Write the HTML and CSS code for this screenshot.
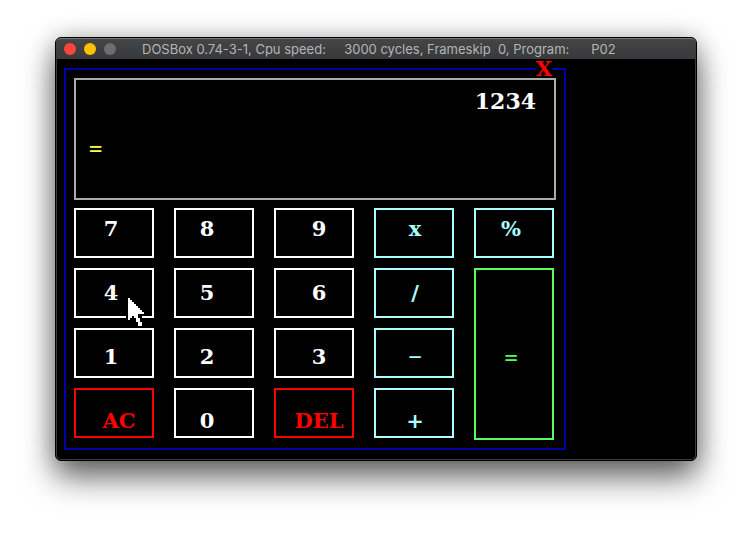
FILE: index.html
```html
<!DOCTYPE html>
<html lang="en">
<head>
<meta charset="utf-8">
<meta name="viewport" content="width=device-width, initial-scale=1">
<title>DOSBox – P02</title>
<link rel="stylesheet" href="styles.css">
</head>
<body>
<main class="window">
  <header class="titlebar">
    <div class="lights">
      <span class="light light-close"></span>
      <span class="light light-minimize"></span>
      <span class="light light-zoom"></span>
    </div>
    <h1 class="title">DOSBox 0.74-3-1, Cpu speed:     3000 cycles, Frameskip  0, Program:      P02</h1>
  </header>
  <div class="screen">
    <section class="calculator">
      <button class="close" type="button">X</button>
      <div class="display">
        <output class="entry">1234</output>
        <output class="result sign">=</output>
      </div>
      <div class="keypad">
        <button class="key row-1 col-1" type="button">7</button>
        <button class="key row-1 col-2" type="button">8</button>
        <button class="key row-1 col-3" type="button">9</button>
        <button class="key operator row-1 col-4" type="button">x</button>
        <button class="key operator row-1 col-5" type="button">%</button>
        <button class="key row-2 col-1" type="button">4</button>
        <button class="key row-2 col-2" type="button">5</button>
        <button class="key row-2 col-3" type="button">6</button>
        <button class="key operator row-2 col-4" type="button">/</button>
        <button class="key equals sign row-3 col-5" type="button">=</button>
        <button class="key row-3 col-1" type="button">1</button>
        <button class="key row-3 col-2" type="button">2</button>
        <button class="key row-3 col-3" type="button">3</button>
        <button class="key operator sign row-3 col-4" type="button">−</button>
        <button class="key command row-4 col-3" type="button">AC</button>
        <button class="key row-4 col-2" type="button">0</button>
        <button class="key command row-4 col-3" type="button">DEL</button>
        <button class="key operator row-4 col-4" type="button">+</button>
      </div>
      <svg class="pointer" viewBox="0 0 10 16" shape-rendering="crispEdges" aria-hidden="true">
        <path d="M1 1h1v1h1v1h1v1h1v1h1v1h1v1h1v1h1v1H6v2h1v2h1v2H6v-2H5v-2H4v-1H3v1H2v1H1z"/>
      </svg>
    </section>
  </div>
</main>
</body>
</html>
```
FILE: styles.css
```css
* {
  box-sizing: border-box;
}

body {
  margin: 0;
  padding: 37px 55px 73px;
  background: #fff;
}

.window {
  border: 1px solid #000;
  border-radius: 6px;
  background: #000;
  box-shadow: 0 16px 32px rgba(0, 0, 0, 0.6), 0 0 24px rgba(0, 0, 0, 0.2);
}

.titlebar {
  display: flex;
  align-items: center;
  height: 21px;
  padding: 0 8px;
  border-top: 1px solid #777879;
  border-radius: 5px 5px 0 0;
  background: linear-gradient(#434546, #37393a);
}

.lights {
  display: flex;
  gap: 8px;
}

.light {
  width: 12px;
  height: 12px;
  border-radius: 50%;
}

.light-close {
  background: #ff443c;
}

.light-minimize {
  background: #ffc000;
}

.light-zoom {
  background: #6b6d6e;
}

.title {
  margin: 0 0 0 26px;
  color: #b4b5b6;
  font: 400 13px/20px Inter, sans-serif;
  white-space: pre;
}

.screen {
  padding: 9px 7px;
  border: 1px solid #3a3a3a;
  border-top: 0;
  border-radius: 0 0 5px 5px;
}

.calculator {
  position: relative;
  max-width: 502px;
  padding: 8px 8px 10px;
  border: 2px solid #0000aa;
  color: #fff;
  font: 700 21px/24px "DejaVu Serif", serif;
}

.close {
  position: absolute;
  top: -9px;
  right: 12px;
  display: flex;
  justify-content: center;
  width: 16px;
  padding: 0;
  border: 0;
  background: #000;
  color: #f00;
  font: inherit;
  line-height: 16px;
}

.display {
  display: flex;
  flex-direction: column;
  gap: 24px;
  min-height: 122px;
  padding: 9px 18px 0 13px;
  border: 2px solid #aaa;
}

.entry {
  font-size: 22px;
  text-align: right;
}

.keypad {
  display: grid;
  grid-template-columns: repeat(5, 1fr);
  grid-auto-rows: 50px;
  gap: 10px 20px;
  margin: 8px 2px 0 0;
}

.key {
  display: flex;
  align-items: center;
  justify-content: center;
  padding: 0;
  border: 2px solid currentColor;
  background: transparent;
  color: #fff;
  font: inherit;
}

.sign {
  font: 400 22px/24px "DejaVu Sans Mono", monospace;
}

.result {
  color: #ffff55;
}

.row-1 {
  padding-bottom: 8px;
}

.row-3 {
  padding-top: 8px;
}

.row-4 {
  padding-top: 16px;
}

.col-1 {
  padding-right: 6px;
}

.col-2 {
  padding-right: 14px;
}

.col-3 {
  padding-left: 10px;
}

.col-4 {
  padding-left: 2px;
}

.col-5 {
  padding-right: 6px;
}

.operator {
  color: #aaffff;
}

.command {
  color: #f00;
}

.equals {
  grid-column: 5;
  grid-row: 2 / span 3;
  margin-bottom: -2px;
  color: #55ff55;
}

.pointer {
  position: absolute;
  top: 226px;
  left: 60px;
  width: 20px;
  height: 32px;
  fill: #fff;
  stroke: #000;
  stroke-width: 2px;
  paint-order: stroke;
  pointer-events: none;
}
```
